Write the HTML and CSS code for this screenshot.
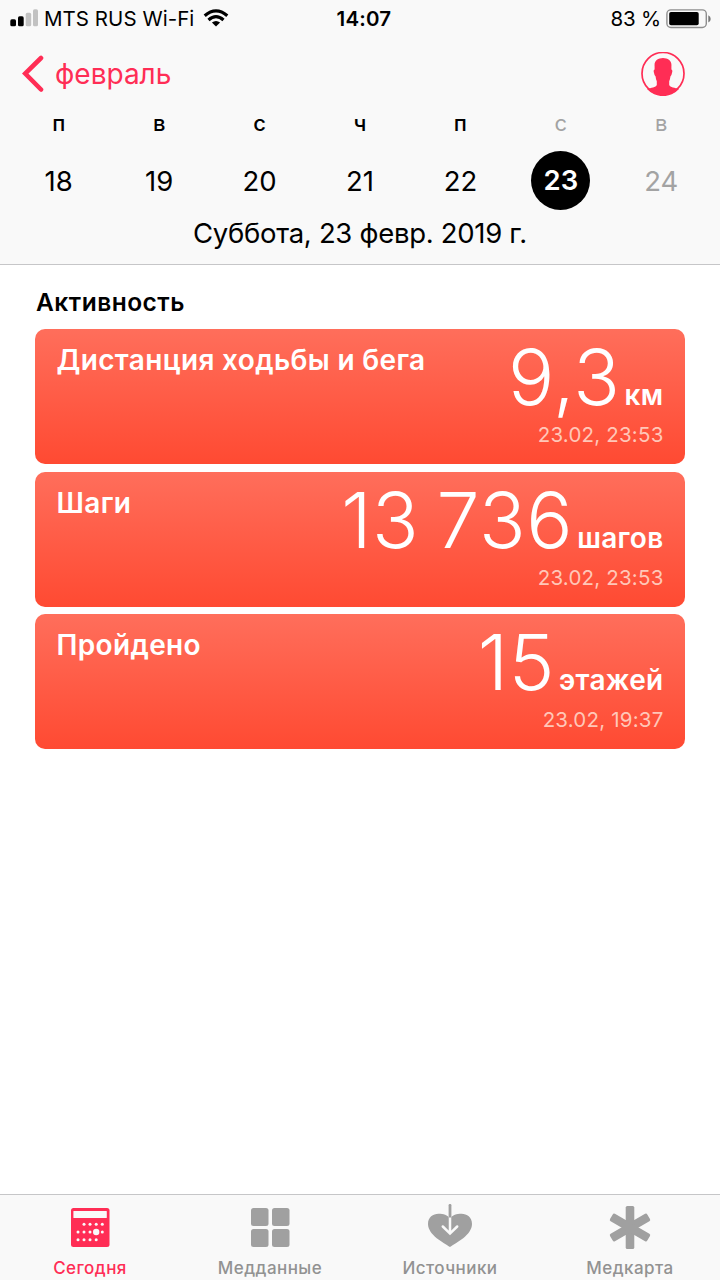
FILE: index.html
```html
<!DOCTYPE html>
<html lang="ru">
<head>
<meta charset="utf-8">
<title>Активность</title>
<link rel="stylesheet" href="styles.css">
</head>
<body>
<div class="app">
  <header class="header">
    <div class="status">
      <div class="status-left">
        <svg class="signal" width="28" height="19" viewBox="0 0 28 19">
          <rect x="0.3" y="10.3" width="5.7" height="7" rx="1.6"/>
          <rect x="8" y="7.3" width="5.7" height="10" rx="1.6"/>
          <rect class="off" x="15.7" y="3.8" width="5.5" height="13.5" rx="1.6"/>
          <rect class="off" x="23" y="0.3" width="5" height="17" rx="1.6"/>
        </svg>
        <span class="carrier">MTS RUS Wi-Fi</span>
        <svg class="wifi" width="26" height="19" viewBox="0 0 26 19">
          <path class="arc" d="M1.7 6.7Q13-3 24.3 6.7"/>
          <path class="arc" d="M5.5 11Q13 4.4 20.5 11"/>
          <path d="M8.9 13.6Q13 10.4 17.1 13.6L13 17.4Z"/>
        </svg>
      </div>
      <span class="clock">14:07</span>
      <div class="status-right">
        <span class="percent">83 %</span>
        <svg class="battery" width="46" height="20" viewBox="0 0 46 20">
          <rect x="0.9" y="0.9" width="39.4" height="17.6" rx="4" fill="none" stroke="#8e8e8e" stroke-width="1.4"/>
          <rect x="3.2" y="3" width="29.5" height="13.2" rx="1.8"/>
          <path d="M42.3 6.3Q44.7 7.3 44.7 9.9T42.3 13.5Z" fill="#777"/>
        </svg>
      </div>
    </div>
    <div class="nav">
      <div class="back">
        <svg width="22" height="38" viewBox="0 0 22 38"><path d="M19 3L3.2 18.5L19 34.5" fill="none" stroke="#ff2d55" stroke-width="4.6" stroke-linecap="round"/></svg>
        <span class="back-label">февраль</span>
      </div>
      <svg class="avatar" width="44" height="44" viewBox="0 0 44 44">
        <circle cx="22" cy="21.5" r="21" fill="none" stroke="#ff2d55" stroke-width="1.7"/>
        <path fill="#ff2d55" d="M13.6 14C13 8.5 17 6 22 5.9C27 6 31 8.5 30.4 14V17.6Q31.8 17.8 31.1 20.6Q30.6 23.8 29.4 24.4Q29.1 27.6 28.2 29.2V33C29 35.4 34 35.8 38 37A21.5 21.5 0 0 1 6 37C10 35.8 15 35.4 15.8 33V29.2Q14.9 27.6 14.6 24.4Q13.4 23.8 12.9 20.6Q12.2 17.8 13.6 17.6Z"/>
      </svg>
    </div>
    <div class="week names">
      <span>п</span><span>в</span><span>с</span><span>ч</span><span>п</span><span class="muted">с</span><span class="muted">в</span>
    </div>
    <div class="week days">
      <span>18</span><span>19</span><span>20</span><span>21</span><span>22</span><span class="selected">23</span><span class="muted">24</span>
    </div>
    <div class="date">Суббота, 23 февр. 2019 г.</div>
  </header>

  <main class="content">
    <h1 class="section">Активность</h1>
    <section class="card">
      <h2 class="card-title">Дистанция ходьбы и бега</h2>
      <div class="reading">
        <div class="amount"><span class="value">9,3</span><span class="unit">км</span></div>
        <div class="time">23.02, 23:53</div>
      </div>
    </section>
    <section class="card">
      <h2 class="card-title">Шаги</h2>
      <div class="reading">
        <div class="amount"><span class="value">13 736</span><span class="unit">шагов</span></div>
        <div class="time">23.02, 23:53</div>
      </div>
    </section>
    <section class="card">
      <h2 class="card-title">Пройдено</h2>
      <div class="reading">
        <div class="amount"><span class="value">15</span><span class="unit">этажей</span></div>
        <div class="time">23.02, 19:37</div>
      </div>
    </section>
  </main>

  <nav class="tabs">
    <div class="tab active">
      <svg width="48" height="48" viewBox="0 0 48 48">
        <rect x="5" y="5" width="38.5" height="39" rx="2.5"/>
        <rect x="7.4" y="8" width="33.4" height="7" rx=".6" fill="#f9f9f9"/>
        <g fill="#f9f9f9">
          <circle cx="18" cy="21.3" r="1.5"/><circle cx="24" cy="21.3" r="1.5"/><circle cx="30.2" cy="21.3" r="1.5"/><circle cx="36.3" cy="21.3" r="1.5"/>
          <circle cx="12" cy="29" r="1.5"/><circle cx="18" cy="29" r="1.5"/><circle cx="24" cy="29" r="1.5"/><circle cx="30.2" cy="29" r="3.2"/><circle cx="36.3" cy="29" r="1.5"/>
          <circle cx="12" cy="36.7" r="1.5"/><circle cx="18" cy="36.7" r="1.5"/><circle cx="24" cy="36.7" r="1.5"/><circle cx="30.2" cy="36.7" r="1.5"/>
        </g>
      </svg>
      <span>Сегодня</span>
    </div>
    <div class="tab">
      <svg width="48" height="48" viewBox="0 0 48 48">
        <rect x="5" y="5" width="17.5" height="18" rx="2.5"/><rect x="26" y="5" width="17.5" height="18" rx="2.5"/>
        <rect x="5" y="26" width="17.5" height="18" rx="2.5"/><rect x="26" y="26" width="17.5" height="18" rx="2.5"/>
      </svg>
      <span>Медданные</span>
    </div>
    <div class="tab">
      <svg width="48" height="48" viewBox="0 0 48 48">
        <path d="M24 44C18 40 2 32 2 21C2 14 7 10.7 12.5 10.7C17.5 10.7 21.5 12 24 15.5C26.5 12 30.5 10.7 35.5 10.7C41 10.7 46 14 46 21C46 32 30 40 24 44Z"/>
        <path d="M24 14V30M16.8 23.5L24 30.6L31.2 23.5" fill="none" stroke="#f9f9f9" stroke-width="2.5" stroke-linecap="round"/>
        <rect x="22.6" y="1" width="2.8" height="13.6" rx="1.2"/>
      </svg>
      <span>Источники</span>
    </div>
    <div class="tab">
      <svg width="48" height="48" viewBox="0 0 48 48">
        <rect x="19.7" y="3" width="8.6" height="43" rx="1.6"/>
        <rect x="19.7" y="3" width="8.6" height="43" rx="1.6" transform="rotate(60 24 24.5)"/>
        <rect x="19.7" y="3" width="8.6" height="43" rx="1.6" transform="rotate(-60 24 24.5)"/>
      </svg>
      <span>Медкарта</span>
    </div>
  </nav>
</div>
</body>
</html>
```
FILE: styles.css
```css
* { box-sizing: border-box; }
body {
  margin: 0;
  background: #fff;
  color: #000;
  font-family: Inter, "Liberation Sans", sans-serif;
}
svg { display: block; flex: none; }
.app { width: 720px; height: 1280px; display: flex; flex-direction: column; overflow: hidden; }

.header { height: 265px; background: #f9f9f9; border-bottom: 1px solid #c6c6c8; }
.status {
  display: grid;
  grid-template-columns: 1fr auto 1fr;
  align-items: center;
  height: 37px;
  padding: 0 8px 0 10px;
  font-size: 20.5px;
  line-height: 37px;
  white-space: nowrap;
}
.status-left { display: flex; align-items: center; }
.signal { margin-right: 6px; }
.signal .off { fill: #c2c2c2; }
.carrier { letter-spacing: 0.05px; }
.wifi { margin-left: 8.5px; }
.wifi .arc { fill: none; stroke: #000; stroke-width: 3.2; }
.clock { padding-left: 6px; font-weight: 600; letter-spacing: 0.2px; }
.status-right { display: flex; align-items: center; justify-content: flex-end; }
.percent { margin-right: 5px; letter-spacing: -0.2px; }

.nav { height: 72px; display: flex; align-items: center; justify-content: space-between; padding: 1px 35px 0 22px; }
.back { display: flex; align-items: center; gap: 11px; color: #ff2d55; font-size: 28px; line-height: 40px; }

.week { display: grid; grid-template-columns: repeat(7, 1fr); padding: 0 8.5px; text-align: center; justify-items: center; }
.names { height: 30px; font-size: 22px; line-height: 28px; font-weight: 500; }
.days { height: 82px; padding-top: 1px; align-items: center; font-size: 27.5px; line-height: 58px; }
.muted { color: #a3a3a3; font-weight: 400; }
.selected { width: 59px; height: 59px; border-radius: 50%; background: #000; color: #fff; font-weight: 600; }
.date { text-align: center; font-size: 27.5px; line-height: 24px; letter-spacing: -0.3px; }

.content { flex: 1; padding: 22px 35px 0; }
.section { margin: 0 0 12px 1px; font-size: 24.5px; line-height: 30px; font-weight: 600; letter-spacing: 0.5px; }
.card {
  display: flex;
  justify-content: space-between;
  height: 135px;
  margin-bottom: 7.5px;
  padding: 0 21.5px;
  border-radius: 10px;
  background: linear-gradient(#ff6e5b, #ff4a32);
  color: #fff;
  white-space: nowrap;
}
.card-title { margin: 16px 0 0; font-size: 28px; line-height: 31px; font-weight: 600; letter-spacing: 0.35px; }
.reading { display: flex; flex-direction: column; align-items: flex-end; padding-top: 13px; }
.amount { display: flex; align-items: baseline; gap: 4px; height: 70px; line-height: 71px; }
.value { font-size: 77px; font-weight: 300; word-spacing: -5px; letter-spacing: 0.6px; }
.unit { font-size: 28px; font-weight: 600; letter-spacing: 0.3px; }
.time { margin-top: 12px; font-size: 20.5px; line-height: 22px; letter-spacing: 0.2px; color: #ffc7b8; }

.tabs { height: 86px; display: grid; grid-template-columns: repeat(4, 1fr); border-top: 1px solid #c6c6c8; background: #f9f9f9; }
.tab { display: flex; flex-direction: column; align-items: center; padding-top: 8px; color: #929292; fill: #a0a0a0; font-size: 17px; line-height: 24px; font-weight: 500; letter-spacing: 0.45px; }
.tab span { margin-top: 5px; }
.active { color: #ff2d55; fill: #ff2d55; }
```
